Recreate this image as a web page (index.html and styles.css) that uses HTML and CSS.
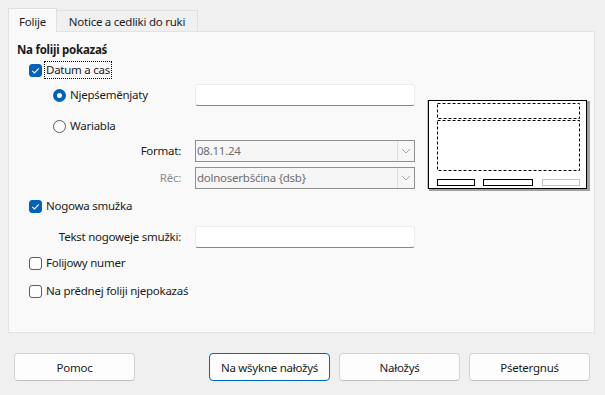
FILE: index.html
```html
<!DOCTYPE html>
<html lang="dsb">
<head>
<meta charset="utf-8">
<title>Nogowa smužka</title>
<link rel="stylesheet" href="styles.css">
</head>
<body>
<div class="dialog">
  <div class="tabs">
    <div class="tab active">Folije</div>
    <div class="tab second">Notice a cedliki do ruki</div>
  </div>
  <div class="panel">
    <div class="form">
      <div class="heading">Na foliji pokazaś</div>

      <div class="row r-datum check-row">
        <span class="cb checked"><svg viewBox="0 0 13 13" width="13" height="13"><path d="M3.3 6.8 L5.5 9 L9.8 4.4" fill="none" stroke="#fff" stroke-width="1.1"/></svg></span>
        <span class="lbl focus">Datum a cas</span>
      </div>

      <div class="row r-fix grid-row">
        <div class="cell-left radio-cell">
          <span class="rb checked"></span><span class="lbl">Njepśeměnjaty</span>
        </div>
        <div class="input"></div>
      </div>

      <div class="row r-var radio-row">
        <span class="rb"></span><span class="lbl">Wariabla</span>
      </div>

      <div class="row r-format grid-row">
        <div class="cell-left right">Format:</div>
        <div class="combo"><span class="val">08.11.24</span><span class="arrow"><svg viewBox="0 0 10 6" width="10" height="6"><path d="M1 1 L5 5 L9 1" fill="none" stroke="#a8a8a8" stroke-width="1"/></svg></span></div>
      </div>

      <div class="row r-lang grid-row">
        <div class="cell-left right muted">Rěc:</div>
        <div class="combo"><span class="val">dolnoserbšćina {dsb}</span><span class="arrow"><svg viewBox="0 0 10 6" width="10" height="6"><path d="M1 1 L5 5 L9 1" fill="none" stroke="#a8a8a8" stroke-width="1"/></svg></span></div>
      </div>

      <div class="row r-footer check-row">
        <span class="cb checked"><svg viewBox="0 0 13 13" width="13" height="13"><path d="M3.3 6.8 L5.5 9 L9.8 4.4" fill="none" stroke="#fff" stroke-width="1.1"/></svg></span>
        <span class="lbl">Nogowa smužka</span>
      </div>

      <div class="row r-ftext grid-row">
        <div class="cell-left right">Tekst nogoweje smužki:</div>
        <div class="input"></div>
      </div>

      <div class="row r-num check-row">
        <span class="cb"></span><span class="lbl">Folijowy numer</span>
      </div>

      <div class="row r-first check-row">
        <span class="cb"></span><span class="lbl">Na prědnej foliji njepokazaś</span>
      </div>
    </div>

    <div class="preview">
      <svg viewBox="0 0 163 92" width="163" height="92">
        <rect x="2" y="2" width="161" height="90" fill="#a0a0a0"/>
        <rect x="0" y="1" width="1" height="89" fill="#c8c8c8"/>
        <rect x="1.5" y="1.5" width="158" height="88" fill="#fff" stroke="#000" stroke-width="1"/>
        <rect x="10.5" y="4.5" width="142" height="15" fill="none" stroke="#000" stroke-width="1" stroke-dasharray="3 2"/>
        <rect x="10.5" y="21.5" width="142" height="50" fill="none" stroke="#000" stroke-width="1" stroke-dasharray="3 2"/>
        <rect x="10.5" y="80.5" width="37" height="6" fill="none" stroke="#000" stroke-width="1"/>
        <rect x="56.5" y="80.5" width="49" height="6" fill="none" stroke="#000" stroke-width="1"/>
        <rect x="115.5" y="80.5" width="37" height="6" fill="none" stroke="#c4c4c4" stroke-width="1"/>
      </svg>
    </div>
  </div>

  <div class="buttons">
    <button class="btn">Pomoc</button>
    <div class="spacer"></div>
    <button class="btn default">Na wšykne nałožyś</button>
    <button class="btn">Nałožyś</button>
    <button class="btn">Pśetergnuś</button>
  </div>
</div>
</body>
</html>
```

FILE: styles.css
```css
html, body {
  margin: 0;
  padding: 0;
}
body {
  background: #f0f0f0;
  width: 605px;
  height: 395px;
  overflow: hidden;
  font-family: "Noto Sans", "Open Sans", sans-serif;
  font-size: 11.5px;
  letter-spacing: -0.25px;
  color: #1b1b1b;
}
.dialog {
  padding: 8px 10px 0 8px;
}
.tabs {
  display: flex;
  height: 23px;
  position: relative;
  z-index: 1;
}
.tab {
  box-sizing: border-box;
  height: 21px;
  margin-top: 2px;
  border: 1px solid #e0e0e0;
  border-bottom: none;
  border-left: none;
  background: #f0f0f0;
  display: flex;
  align-items: center;
  justify-content: center;
  padding-top: 2px;
  line-height: 16px;
}
.tab.active {
  width: 49px;
  height: 24px;
  margin-top: 0;
  border-left: 1px solid #e0e0e0;
  background: #f9f9f9;
  padding-top: 3px;
}
.tab.second {
  width: 141px;
}
.panel {
  box-sizing: border-box;
  width: 587px;
  height: 302px;
  border: 1px solid #e3e3e3;
  background: #f9f9f9;
  display: flex;
  padding-left: 8px;
}
.form {
  width: 398px;
  flex: none;
}
.heading {
  font-weight: bold;
  height: 16px;
  line-height: 16px;
  margin-top: 10px;
}
.row {
  display: flex;
  align-items: center;
  line-height: 16px;
}
.check-row { padding-left: 12px; height: 16px; }
.radio-row { padding-left: 36px; height: 16px; }
.grid-row {
  display: grid;
  grid-template-columns: 164px 220px;
  column-gap: 14px;
  height: 22px;
  align-items: center;
}
.cell-left { display: flex; align-items: center; }
.radio-cell { padding-left: 36px; }
.right { justify-content: flex-end; }
.muted { color: #8c8c8c; }

.r-datum { margin-top: 4px; }
.r-fix { margin-top: 6px; }
.r-var { margin-top: 12px; }
.r-format { margin-top: 6px; }
.r-lang { margin-top: 5px; }
.r-footer { margin-top: 9px; }
.r-ftext { margin-top: 12px; }
.r-num { margin-top: 7px; }
.r-first { margin-top: 12px; }

.lbl { margin-left: 4px; }
.lbl.focus {
  outline: 1px dotted #000;
  outline-offset: 0;
  padding: 0 1px;
  margin-left: 3px;
}

.cb {
  box-sizing: border-box;
  width: 13px;
  height: 13px;
  border: 1px solid #5c5c5c;
  border-radius: 3px;
  background: #fdfdfd;
  display: inline-block;
  flex: none;
}
.cb svg { display: block; margin: -1px; }
.cb.checked {
  background: #0063b9;
  border-color: #0063b9;
}
.rb {
  box-sizing: border-box;
  width: 13px;
  height: 13px;
  border: 1px solid #5c5c5c;
  border-radius: 50%;
  background: #fdfdfd;
  display: inline-block;
  flex: none;
}
.rb.checked {
  border: 4px solid #0063b9;
  background: #fff;
}

.input {
  box-sizing: border-box;
  width: 220px;
  height: 22px;
  background: #fff;
  border: 1px solid #ececec;
  border-bottom: 1px solid #868686;
  border-radius: 3px;
}
.combo {
  box-sizing: border-box;
  width: 220px;
  height: 22px;
  background: #f6f6f6;
  border: 1px solid #8f8f8f;
  display: flex;
  align-items: center;
  color: #6d6d6d;
}
.combo .val {
  flex: 1;
  padding-left: 1px;
}
.combo .arrow {
  box-sizing: border-box;
  width: 17px;
  height: 20px;
  border-left: 1px solid #dedede;
  display: flex;
  align-items: center;
  justify-content: center;
}
.combo .arrow svg { display: block; }

.preview {
  margin-left: 12px;
  margin-top: 67px;
}
.preview svg { display: block; }

.buttons {
  display: flex;
  margin-top: 20px;
  padding-left: 6px;
  width: 576px;
  gap: 9px;
}
.spacer { flex: 1; }
.btn {
  box-sizing: border-box;
  width: 121px;
  height: 28px;
  font-family: inherit;
  font-size: 11.5px;
  letter-spacing: -0.25px;
  color: #1b1b1b;
  background: #fdfdfd;
  border: 1px solid #d4d4d4;
  border-bottom-color: #c2c2c2;
  border-radius: 4px;
  padding: 0;
}
.btn.default {
  border: 1px solid #0067c0;
}
```
